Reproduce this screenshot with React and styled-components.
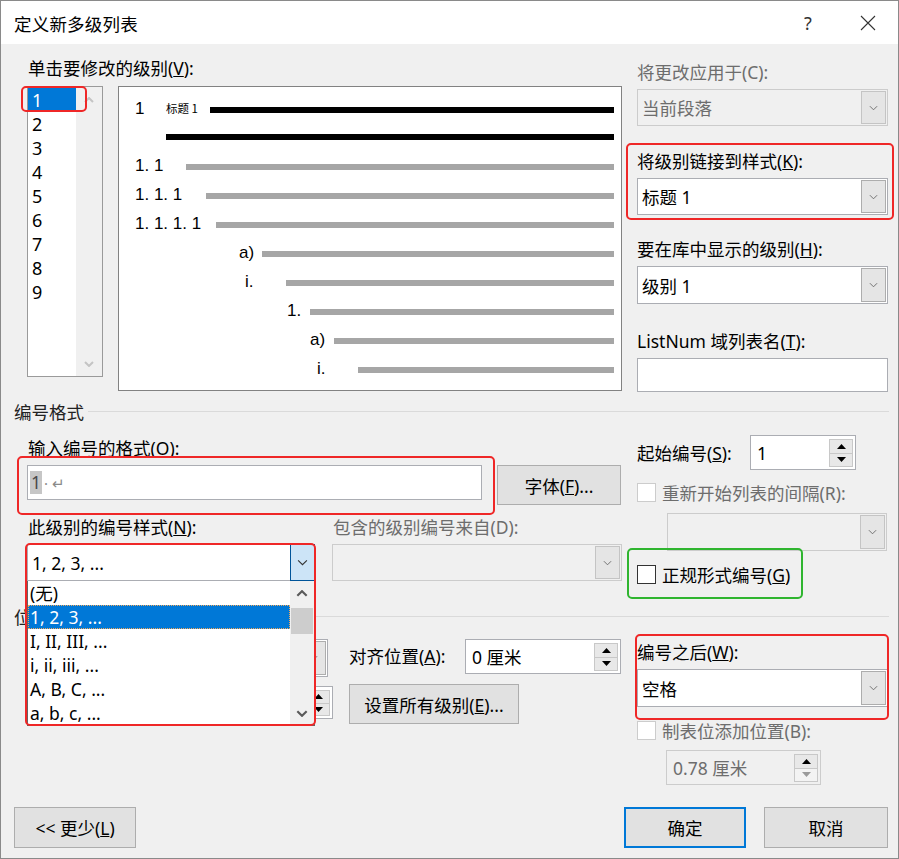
import React from "react";
import styled, { createGlobalStyle } from "styled-components";

const GlobalStyle = createGlobalStyle`
  html, body { margin: 0; padding: 0; background: #fff; }
  body {
    font-family: "Noto Sans", "Noto Sans CJK SC", sans-serif;
    font-size: 17.5px;
    color: #000;
  }
  * { box-sizing: border-box; }
`;

const Dialog = styled.div`
  width: 899px;
  height: 859px;
  border: 1px solid #8a8a8a;
  display: flex;
  flex-direction: column;
  background: #f0f0f0;
  overflow: hidden;
`;

const TitleBar = styled.div`
  height: 43px;
  background: #fff;
  display: flex;
  align-items: center;
  padding-left: 13px;
`;

const TitleText = styled.div`
  flex: 1;
  margin-top: 2px;
  letter-spacing: 0.2px;
`;

const TitleButton = styled.div`
  width: 60px;
  height: 43px;
  display: flex;
  align-items: center;
  justify-content: center;
  color: #333;
  font-size: 18px;
`;

const Body = styled.div`
  flex: 1;
  padding: 13px 9px 0 13px;
`;

const TopSection = styled.div`
  display: flex;
  gap: 15px;
  padding-left: 13px;
`;

const LeftBlock = styled.div`
  width: 595px;
`;

const RightCol = styled.div`
  width: 251px;
  padding-top: ${(p) => p.$pt || 0}px;
`;

const Label = styled.div`
  height: ${(p) => p.$h || 22}px;
  line-height: ${(p) => p.$h || 22}px;
  white-space: nowrap;
  color: ${(p) => (p.$disabled ? "#6d6d6d" : "#000")};
  margin-left: ${(p) => p.$ml || 0}px;
  margin-top: ${(p) => p.$mt || 0}px;
  width: ${(p) => (p.$w ? `${p.$w}px` : "auto")};
  flex-shrink: 0;
`;

const Field = styled.div`
  position: relative;
  display: flex;
  flex-direction: column;
  gap: 6px;
  margin-top: ${(p) => p.$mt || 0}px;
`;

const LevelRow = styled.div`
  display: flex;
  gap: 15px;
  margin-top: 7px;
  align-items: flex-start;
`;

const LevelList = styled.div`
  position: relative;
  width: 76px;
  height: 291px;
  border: 1px solid #9a9a9a;
  background: #fff;
  display: flex;
`;

const LevelItems = styled.div`
  width: 48px;
  padding-top: 1px;
`;

const LevelItem = styled.div`
  height: 24px;
  line-height: 24px;
  padding-left: 4px;
  font-size: 18px;
  background: ${(p) => (p.$selected ? "#0078d7" : "transparent")};
  color: ${(p) => (p.$selected ? "#fff" : "#000")};
`;

const ScrollTrack = styled.div`
  flex: 1;
  background: #f0f0f0;
  display: flex;
  flex-direction: column;
  align-items: center;
  justify-content: space-between;
  padding: 10px 0 9px;
`;

const Preview = styled.div`
  width: 504px;
  height: 305px;
  border: 1px solid #828282;
  background: #fff;
  padding-right: 7px;
  font-family: "Liberation Sans", Arial, sans-serif;
  font-size: 17px;
`;

const PreviewRow = styled.div`
  display: flex;
  align-items: flex-end;
  height: ${(p) => p.$h}px;
  padding-left: ${(p) => p.$indent}px;
`;

const PreviewNum = styled.span`
  width: ${(p) => p.$w}px;
  flex-shrink: 0;
  line-height: 1;
  white-space: pre;
  margin-bottom: -3px;
`;

const PreviewSub = styled.span`
  width: ${(p) => p.$w}px;
  flex-shrink: 0;
  font-family: "Noto Sans CJK SC", sans-serif;
  font-size: 11.5px;
  line-height: 1;
  white-space: pre;
`;

const PreviewBar = styled.div`
  flex: 1;
  height: 6px;
  margin-bottom: 1px;
  background: ${(p) => (p.$dark ? "#000" : "#a6a6a6")};
`;

const Combo = styled.div`
  position: relative;
  display: flex;
  width: ${(p) => (p.$w ? `${p.$w}px` : "100%")};
  height: ${(p) => p.$h || 37}px;
  border: 1px solid ${(p) => (p.$disabled ? "#cccccc" : "#abadb3")};
  background: ${(p) => (p.$disabled ? "#f0f0f0" : "#fff")};
  margin-left: ${(p) => p.$ml || 0}px;
  margin-top: ${(p) => p.$mt || 0}px;
  flex-shrink: 0;
`;

const ComboValue = styled.div`
  flex: 1;
  display: flex;
  align-items: center;
  padding-left: 4px;
  white-space: nowrap;
  overflow: hidden;
  color: ${(p) => (p.$disabled ? "#6d6d6d" : "#000")};
`;

const ComboButton = styled.div`
  width: 25px;
  margin: ${(p) => (p.$active ? "-1px -1px -1px 0" : "1px 1px 1px 0")};
  border: 1px solid
    ${(p) => (p.$active ? "#005499" : p.$disabled ? "#c4c4c4" : "#adadad")};
  background: ${(p) => (p.$active ? "#cce4f7" : "#e5e5e5")};
  display: flex;
  align-items: center;
  justify-content: center;
  flex-shrink: 0;
`;

const TextBox = styled.div`
  width: 100%;
  height: ${(p) => p.$h || 34}px;
  border: 1px solid #abadb3;
  background: #fff;
`;

const Spin = styled.div`
  display: flex;
  width: ${(p) => p.$w}px;
  height: ${(p) => p.$h || 35}px;
  border: 1px solid ${(p) => (p.$disabled ? "#cccccc" : "#abadb3")};
  background: ${(p) => (p.$disabled ? "#f0f0f0" : "#fff")};
  margin-left: ${(p) => p.$ml || 0}px;
  margin-top: ${(p) => p.$mt || 0}px;
  flex-shrink: 0;
`;

const SpinValue = styled.div`
  flex: 1;
  display: flex;
  align-items: center;
  padding-left: 6px;
  white-space: nowrap;
  overflow: hidden;
  color: ${(p) => (p.$disabled ? "#6d6d6d" : "#000")};
`;

const SpinButtons = styled.div`
  width: 26px;
  display: flex;
  flex-direction: column;
  padding: 3px 2px 2px 0;
`;

const SpinButton = styled.div`
  flex: 1;
  border: 1px solid #c8c8c8;
  background: ${(p) => (p.$disabled ? "#f3f3f3" : "#e8e8e8")};
  display: flex;
  align-items: center;
  justify-content: center;
  & + & {
    border-top: none;
  }
`;

const CheckRow = styled.div`
  position: relative;
  display: flex;
  align-items: center;
  gap: 6px;
  height: 20px;
  margin-top: ${(p) => p.$mt || 0}px;
  color: ${(p) => (p.$disabled ? "#6d6d6d" : "#000")};
  white-space: nowrap;
`;

const CheckBox = styled.span`
  width: 19px;
  height: 19px;
  flex-shrink: 0;
  border: 1px solid ${(p) => (p.$disabled ? "#cccccc" : "#333")};
  background: #fff;
`;

const Button = styled.button`
  font: inherit;
  color: #000;
  width: ${(p) => p.$w}px;
  height: ${(p) => p.$h || 40}px;
  margin-left: ${(p) => p.$ml || 0}px;
  padding: 0;
  background: #e1e1e1;
  border: ${(p) => (p.$primary ? "2px solid #0078d7" : "1px solid #adadad")};
  flex-shrink: 0;
`;

const Mark = styled.div`
  position: absolute;
  pointer-events: none;
  z-index: 20;
  top: ${(p) => p.$t}px;
  left: ${(p) => p.$l}px;
  width: ${(p) => p.$w}px;
  height: ${(p) => p.$h}px;
  border: 2px solid ${(p) => (p.$green ? "#2fb52f" : "#ef2727")};
  border-radius: 5px;
`;

const GroupHeading = styled.div`
  display: flex;
  align-items: center;
  gap: 4px;
  height: 22px;
  margin-top: ${(p) => p.$mt}px;
  color: #222;
  &::after {
    content: "";
    flex: 1;
    height: 1px;
    background: #dadada;
  }
`;

const TwoCol = styled.div`
  display: grid;
  grid-template-columns: 595px 251px;
  column-gap: 15px;
  padding-left: 13px;
  align-items: start;
`;

const Row = styled.div`
  display: flex;
  align-items: ${(p) => p.$align || "flex-start"};
  margin-top: ${(p) => p.$mt || 0}px;
`;

const Gap = styled.div`
  width: ${(p) => p.$w}px;
  flex-shrink: 0;
`;

const StyleGrid = styled.div`
  display: grid;
  grid-template-columns: 288px 290px;
  column-gap: 17px;
  row-gap: 6px;
  margin-top: 11px;
`;

const FormatInputWrap = styled.div`
  position: relative;
  width: 455px;
  height: 35px;
  border: 1px solid #abadb3;
  background: #fff;
  display: flex;
  align-items: center;
  padding-left: 2px;
`;

const FormatHi = styled.span`
  background: #c6c6c6;
  color: #4a4a4a;
  padding: 0 1px;
  line-height: 23px;
`;

const FormatGhost = styled.span`
  color: #8a8a8a;
  font-size: 15px;
  margin-left: 2px;
`;

const ComboWrap = styled.div`
  position: relative;
`;

const Popup = styled.div`
  position: absolute;
  top: 100%;
  left: 0;
  width: 288px;
  height: 145px;
  background: #fff;
  border: 1px solid #646464;
  border-top: none;
  display: flex;
  z-index: 10;
`;

const PopupItems = styled.div`
  flex: 1;
`;

const PopupItem = styled.div`
  height: 24px;
  line-height: 24px;
  padding-left: 2px;
  white-space: nowrap;
  background: ${(p) => (p.$selected ? "#0078d7" : "transparent")};
  color: ${(p) => (p.$selected ? "#fff" : "#000")};
  outline: ${(p) => (p.$selected ? "1px dotted #f1a85c" : "none")};
  outline-offset: -1px;
`;

const PopupScroll = styled.div`
  width: 24px;
  background: #f0f0f0;
  display: flex;
  flex-direction: column;
  align-items: center;
`;

const ScrollArrow = styled.div`
  height: ${(p) => p.$h}px;
  display: flex;
  align-items: center;
  justify-content: center;
  width: 100%;
`;

const ScrollThumb = styled.div`
  width: 22px;
  height: 26px;
  margin-top: 2px;
  background: #cdcdcd;
`;

const Spacer = styled.div`
  flex: 1;
`;

const Footer = styled.div`
  display: flex;
  justify-content: space-between;
  margin-top: 22px;
  padding-right: 1px;
`;

const FooterGroup = styled.div`
  display: flex;
  gap: 18px;
`;

const Chevron = ({ up, color = "#606060", w = 9, weight = 1 }) => (
  <svg width={w} height={Math.round(w / 2) + 1} viewBox="0 0 10 6">
    <polyline
      points={up ? "1,5 5,1 9,5" : "1,1 5,5 9,1"}
      fill="none"
      stroke={color}
      strokeWidth={weight}
    />
  </svg>
);

const Tri = ({ up, color = "#000" }) => (
  <svg width="9" height="5" viewBox="0 0 9 5">
    <polygon points={up ? "0,5 4.5,0 9,5" : "0,0 9,0 4.5,5"} fill={color} />
  </svg>
);

const Select = ({ value, w, h, disabled, active, ml, mt }) => (
  <Combo $w={w} $h={h} $disabled={disabled} $ml={ml} $mt={mt}>
    <ComboValue $disabled={disabled}>{value}</ComboValue>
    <ComboButton $disabled={disabled} $active={active}>
      <Chevron color={active ? "#333" : "#666"} w={active ? 11 : 9} />
    </ComboButton>
  </Combo>
);

const SpinBox = ({ value, w, h, disabled, ml, mt }) => (
  <Spin $w={w} $h={h} $disabled={disabled} $ml={ml} $mt={mt}>
    <SpinValue $disabled={disabled}>{value}</SpinValue>
    <SpinButtons>
      <SpinButton>
        <Tri up />
      </SpinButton>
      <SpinButton $disabled={disabled}>
        <Tri color={disabled ? "#9a9a9a" : "#000"} />
      </SpinButton>
    </SpinButtons>
  </Spin>
);

const levels = ["1", "2", "3", "4", "5", "6", "7", "8", "9"];

const previewRows = [
  { indent: 16, num: "1", numW: 31, sub: "标题 1", subW: 44, dark: true, h: 27 },
  { indent: 47, dark: true, h: 27 },
  { indent: 16, num: "1. 1", numW: 51, h: 30 },
  { indent: 16, num: "1. 1. 1", numW: 71, h: 29 },
  { indent: 16, num: "1. 1. 1. 1", numW: 81, h: 29 },
  { indent: 120, num: "a)", numW: 23, h: 29 },
  { indent: 126, num: "i.", numW: 41, h: 29 },
  { indent: 168, num: "1.", numW: 23, h: 29 },
  { indent: 191, num: "a)", numW: 24, h: 29 },
  { indent: 198, num: "i.", numW: 41, h: 29 },
];

const numberStyles = [
  "(无)",
  "1, 2, 3, ...",
  "I, II, III, ...",
  "i, ii, iii, ...",
  "A, B, C, ...",
  "a, b, c, ...",
];

const App = () => {
  return (
    <>
      <GlobalStyle />
      <Dialog>
        <TitleBar>
          <TitleText>定义新多级列表</TitleText>
          <TitleButton>?</TitleButton>
          <TitleButton>
            <svg width="16" height="16" viewBox="0 0 16 16">
              <path d="M1 1 L15 15 M15 1 L1 15" stroke="#333" strokeWidth="1.1" />
            </svg>
          </TitleButton>
        </TitleBar>

        <Body>
          <TopSection>
            <LeftBlock>
              <Label $ml={1}>
                单击要修改的级别(<u>V</u>):
              </Label>
              <LevelRow>
                <LevelList>
                  <LevelItems>
                    {levels.map((lv, i) => (
                      <LevelItem key={lv} $selected={i === 0}>
                        {lv}
                      </LevelItem>
                    ))}
                  </LevelItems>
                  <ScrollTrack>
                    <Chevron up color="#c4c4c4" w={10} weight={2} />
                    <Chevron color="#c4c4c4" w={10} weight={2} />
                  </ScrollTrack>
                  <Mark $t={-1} $l={-7} $w={66} $h={26} />
                </LevelList>
                <Preview>
                  {previewRows.map((r, i) => (
                    <PreviewRow key={i} $h={r.h} $indent={r.indent}>
                      {r.num && <PreviewNum $w={r.numW}>{r.num}</PreviewNum>}
                      {r.sub && <PreviewSub $w={r.subW}>{r.sub}</PreviewSub>}
                      <PreviewBar $dark={r.dark} />
                    </PreviewRow>
                  ))}
                </Preview>
              </LevelRow>
            </LeftBlock>

            <RightCol $pt={4}>
              <Field>
                <Label $disabled>将更改应用于(C):</Label>
                <Select value="当前段落" disabled />
              </Field>
              <Field $mt={24}>
                <Label>
                  将级别链接到样式(<u>K</u>):
                </Label>
                <Select value="标题 1" />
                <Mark $t={-7} $l={-11} $w={268} $h={77} />
              </Field>
              <Field $mt={23}>
                <Label>
                  要在库中显示的级别(<u>H</u>):
                </Label>
                <Select value="级别 1" h={38} />
              </Field>
              <Field $mt={26}>
                <Label>
                  ListNum 域列表名(<u>T</u>):
                </Label>
                <TextBox $h={34} />
              </Field>
            </RightCol>
          </TopSection>

          <GroupHeading $mt={8}>编号格式</GroupHeading>

          <TwoCol>
            <div>
              <Label $ml={1} $mt={15}>
                输入编号的格式(<u>O</u>):
              </Label>
              <Row $mt={6}>
                <FormatInputWrap>
                  <FormatHi>1</FormatHi>
                  <FormatGhost>· ↵</FormatGhost>
                  <Mark $t={-10} $l={-11} $w={478} $h={59} />
                </FormatInputWrap>
                <Button $w={124} $ml={15}>
                  字体(<u>F</u>)...
                </Button>
              </Row>
              <StyleGrid>
                <Label $ml={1}>
                  此级别的编号样式(<u>N</u>):
                </Label>
                <Label $ml={1} $disabled>
                  包含的级别编号来自(D):
                </Label>
                <ComboWrap>
                  <Select value="1, 2, 3, ..." active />
                  <Popup>
                    <PopupItems>
                      {numberStyles.map((s, i) => (
                        <PopupItem key={s} $selected={i === 1}>
                          {s}
                        </PopupItem>
                      ))}
                    </PopupItems>
                    <PopupScroll>
                      <ScrollArrow $h={25}>
                        <Chevron up color="#5a5a5a" w={12} weight={1.8} />
                      </ScrollArrow>
                      <ScrollThumb />
                      <Spacer />
                      <ScrollArrow $h={24}>
                        <Chevron color="#5a5a5a" w={12} weight={1.8} />
                      </ScrollArrow>
                    </PopupScroll>
                  </Popup>
                  <Mark $t={-1} $l={-2} $w={291} $h={183} />
                </ComboWrap>
                <Select value="" disabled />
              </StyleGrid>
            </div>

            <div>
              <Row $mt={13} $align="center">
                <Label $w={113}>
                  起始编号(<u>S</u>):
                </Label>
                <SpinBox value="1" w={106} />
              </Row>
              <CheckRow $mt={12} $disabled>
                <CheckBox $disabled />
                <span>重新开始列表的间隔(R):</span>
              </CheckRow>
              <Select value="" disabled w={220} h={38} ml={30} mt={11} />
              <CheckRow $mt={13}>
                <CheckBox />
                <span>
                  正规形式编号(<u>G</u>)
                </span>
                <Mark $green $t={-16} $l={-10} $w={176} $h={51} />
              </CheckRow>
            </div>
          </TwoCol>

          <GroupHeading $mt={21}>位置</GroupHeading>

          <TwoCol>
            <div>
              <Row $mt={12}>
                <Gap $w={142} />
                <Select value="" w={159} h={38} />
                <Label $ml={21} $w={116} $h={35}>
                  对齐位置(<u>A</u>):
                </Label>
                <SpinBox value="0 厘米" w={156} />
              </Row>
              <Row $mt={7}>
                <Gap $w={142} />
                <SpinBox value="" w={164} h={33} mt={2} />
                <Button $w={170} $ml={16}>
                  设置所有级别(<u>E</u>)...
                </Button>
              </Row>
            </div>

            <div>
              <Field $mt={14}>
                <Label>
                  编号之后(<u>W</u>):
                </Label>
                <Select value="空格" h={38} />
                <Mark $t={-7} $l={-2} $w={254} $h={86} />
              </Field>
              <CheckRow $mt={13} $disabled>
                <CheckBox $disabled />
                <span>制表位添加位置(B):</span>
              </CheckRow>
              <SpinBox value="0.78 厘米" w={155} ml={29} mt={10} disabled />
            </div>
          </TwoCol>

          <Footer>
            <Button $w={122} $h={41}>
              {"<< 更少("}
              <u>L</u>)
            </Button>
            <FooterGroup>
              <Button $w={122} $h={41} $primary>
                确定
              </Button>
              <Button $w={124} $h={41}>
                取消
              </Button>
            </FooterGroup>
          </Footer>
        </Body>
      </Dialog>
    </>
  );
};

export default App;
